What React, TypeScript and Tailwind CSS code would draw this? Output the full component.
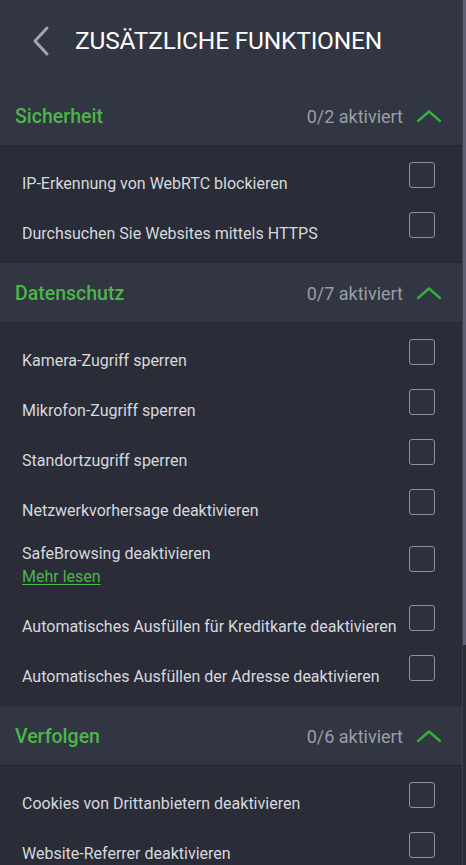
import React from "react";

type Item = { label: string; more?: boolean };
type Section = { title: string; count: string; items: Item[] };

const SECTIONS: Section[] = [
  {
    title: "Sicherheit",
    count: "0/2 aktiviert",
    items: [
      { label: "IP-Erkennung von WebRTC blockieren" },
      { label: "Durchsuchen Sie Websites mittels HTTPS" },
    ],
  },
  {
    title: "Datenschutz",
    count: "0/7 aktiviert",
    items: [
      { label: "Kamera-Zugriff sperren" },
      { label: "Mikrofon-Zugriff sperren" },
      { label: "Standortzugriff sperren" },
      { label: "Netzwerkvorhersage deaktivieren" },
      { label: "SafeBrowsing deaktivieren", more: true },
      { label: "Automatisches Ausfüllen für Kreditkarte deaktivieren" },
      { label: "Automatisches Ausfüllen der Adresse deaktivieren" },
    ],
  },
  {
    title: "Verfolgen",
    count: "0/6 aktiviert",
    items: [
      { label: "Cookies von Drittanbietern deaktivieren" },
      { label: "Website-Referrer deaktivieren" },
    ],
  },
];

function Checkbox({ className = "" }: { className?: string }) {
  return (
    <div
      className={`w-[26px] h-[26px] shrink-0 rounded-[3px] border border-[#8e919a] bg-[#2f323d] ${className}`}
    />
  );
}

function Row({ item }: { item: Item }) {
  if (item.more) {
    return (
      <div className="flex items-start justify-between h-[66px] pl-[22px] pr-[27px]">
        <div className="mt-[5px]">
          <div className="text-[16px] leading-5 text-[#d6d8dd]">{item.label}</div>
          <a className="block mt-[3px] text-[16px] leading-5 text-[#4cb54a] underline underline-offset-2">
            Mehr lesen
          </a>
        </div>
        <Checkbox className="mt-[7px]" />
      </div>
    );
  }
  return (
    <div className="flex items-start justify-between h-[50px] pl-[22px] pr-[27px]">
      <div className="mt-[12px] text-[16px] leading-5 text-[#d6d8dd] whitespace-nowrap">
        {item.label}
      </div>
      <Checkbox />
    </div>
  );
}

function SectionBlock({ section }: { section: Section }) {
  return (
    <section>
      <div className="flex items-center justify-between h-[60px] pl-[15px] pr-[20px] bg-[#323542] border-b border-[#262833]">
        <h2 className="text-[19.5px] font-medium text-[#4cb54a] pt-[2px]">{section.title}</h2>
        <div className="flex items-center gap-[13px]">
          <span className="text-[18px] text-[#9b9ea6] pt-[2px]">{section.count}</span>
          <svg width="26" height="14" viewBox="0 0 26 14" fill="none">
            <path
              d="M2 12 L13 2.5 L24 12"
              stroke="#2fb33a"
              strokeWidth="2.4"
              strokeLinecap="round"
              strokeLinejoin="round"
            />
          </svg>
        </div>
      </div>
      <div className="pt-4 bg-[#2a2d38] border-b border-[#262833]">
        {section.items.map((item) => (
          <Row key={item.label} item={item} />
        ))}
      </div>
    </section>
  );
}

export default function App() {
  return (
    <div
      className="flex h-[865px] w-[466px] overflow-hidden bg-[#2a2d38]"
      style={{ fontFamily: "Roboto, 'Noto Sans', sans-serif" }}
    >
      <main className="flex-1 min-w-0">
        {/* header */}
        <header className="flex items-center h-[86px] bg-[#323542] pl-[31px] pb-[4px]">
          <svg width="20" height="32" viewBox="0 0 20 32" fill="none">
            <path
              d="M16 3 L4 16 L16 29"
              stroke="#a3a5ab"
              strokeWidth="3"
              strokeLinecap="round"
              strokeLinejoin="round"
            />
          </svg>
          <h1 className="ml-[24px] text-[24.5px] text-white tracking-[-0.2px]">
            ZUSÄTZLICHE FUNKTIONEN
          </h1>
        </header>

        {SECTIONS.map((s) => (
          <SectionBlock key={s.title} section={s} />
        ))}
      </main>

      {/* scrollbar */}
      <div className="w-[4px] shrink-0 border-l border-[#3a3d4a]">
        <div className="h-[645px] bg-[#5c6070]" />
      </div>
    </div>
  );
}
